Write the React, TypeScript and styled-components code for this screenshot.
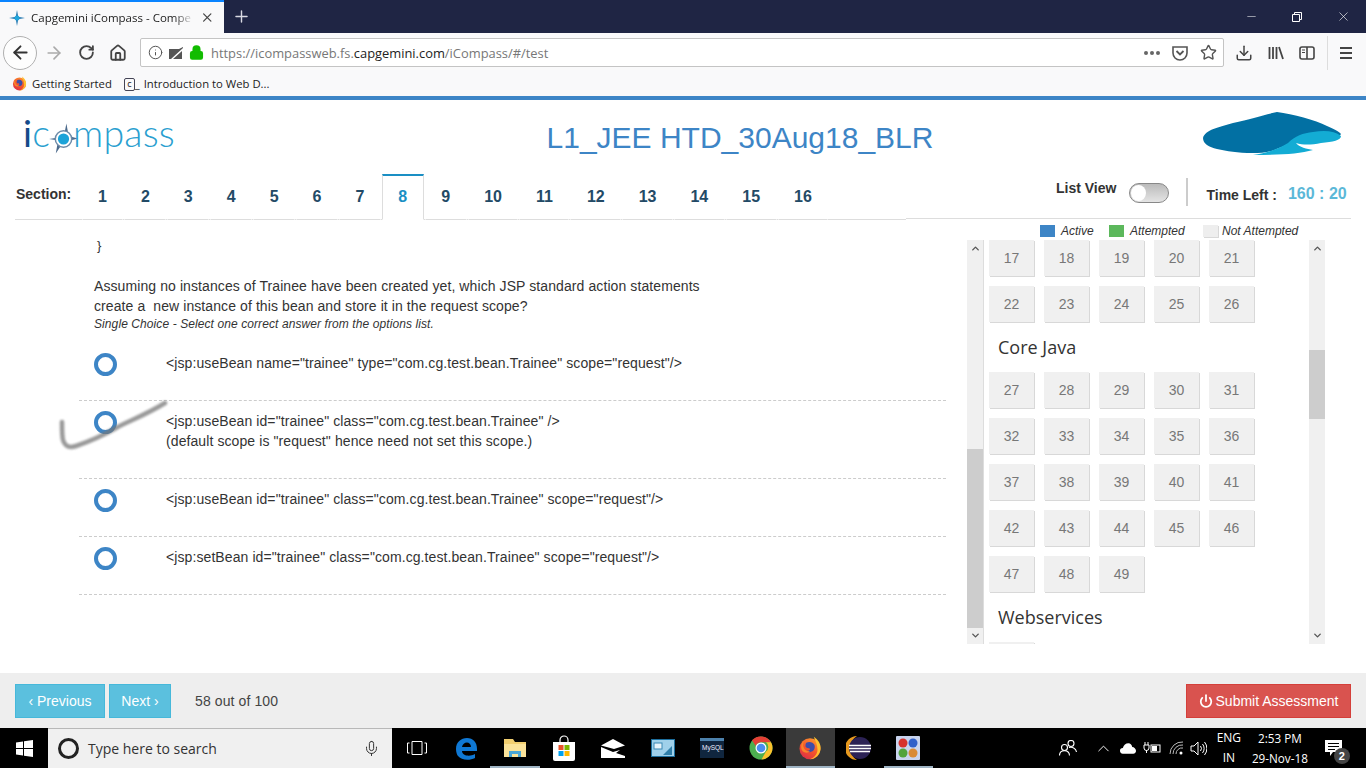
import styled, { createGlobalStyle } from "styled-components";
import {
  ArrowLeft,
  ArrowRight,
  RotateCw,
  Home,
  Info,
  Lock,
  Star,
  Download,
  Minus,
  X,
  Plus,
  Power,
  Mic,
  ChevronUp,
  ChevronDown,
} from "lucide-react";

const GlobalStyle = createGlobalStyle`
  html, body {
    margin: 0;
    padding: 0;
    overflow: hidden;
    background: #fff;
  }
  * { box-sizing: border-box; }
`;

const sections = [1, 2, 3, 4, 5, 6, 7, 8, 9, 10, 11, 12, 13, 14, 15, 16];

const options = [
  { lines: ['<jsp:useBean name="trainee" type="com.cg.test.bean.Trainee" scope="request"/>'], tall: false },
  {
    lines: ['<jsp:useBean id="trainee" class="com.cg.test.bean.Trainee" />', '(default scope is "request" hence need not set this scope.)'],
    tall: true,
  },
  { lines: ['<jsp:useBean id="trainee" class="com.cg.test.bean.Trainee" scope="request"/>'], tall: false },
  { lines: ['<jsp:setBean id="trainee" class="com.cg.test.bean.Trainee" scope="request"/>'], tall: false },
];

const range = (from: number, to: number) =>
  Array.from({ length: to - from + 1 }, (_, i) => from + i);

function FirefoxIcon({ size }: { size: number }) {
  return (
    <svg width={size} height={size} viewBox="0 0 32 32">
      <defs>
        <linearGradient id="ffg" x1="0.8" y1="0" x2="0.2" y2="1">
          <stop offset="0" stopColor="#ff9a2e" />
          <stop offset="0.55" stopColor="#f4532c" />
          <stop offset="1" stopColor="#d92d4a" />
        </linearGradient>
      </defs>
      <circle cx="16" cy="17" r="14" fill="url(#ffg)" />
      <path d="M11 9c4-2 9-1 11 3 1 3 0 6-2 8-3 2-7 2-9 0 3 0 5-1 5-3-2-1-5-1-6-3 0-2 0-4 1-5z" fill="#3f4da8" />
      <path d="M21 1c6 4 10 10 9 17-1 7-7 13-14 13 6-2 10-7 10-13 0-6-3-12-5-17z" fill="#ffc12e" />
      <path d="M8 6c-1 3-2 7 0 10 1 3 5 5 8 4-2 3-7 3-10 0-3-4-2-10 2-14z" fill="#f9842a" />
    </svg>
  );
}

function CompassMark() {
  return (
    <svg width="29" height="32" viewBox="0 0 30 32">
      <path d="M18 0l-2 10 4 1z M7 31l6-9-4-2z M0 16l10-1.500v3z M30 15.500l-10-2.500v5z" fill="#4c6a8c" />
      <circle cx="15" cy="16" r="8.500" fill="#fff" stroke="#6d8ba8" strokeWidth="1.500" />
      <circle cx="15" cy="16" r="5.800" fill="#1ca3d8" />
    </svg>
  );
}

function CapgeminiLogo() {
  return (
    <svg width="138" height="44" viewBox="0 0 138 44">
      <path
        d="M0 26C2 18 16 15 30 11 48 7 60 3 74 0c16 2 38 8 50 14 6 3 12 5 14 8-2 4-18 6-34 8-14 0-20 3-28 6-10 5-18 5-26 5-16 0-26-2-36-4C6 35 0 32 0 26z"
        fill="#0270a3"
      />
      <path
        d="M85 31c7-7 15-10 25-11 12-2 22-1 28 4 0 4-8 6-20 7-10 2-18 2-25 0 3 4 11 6 17 7-14 4-34 5-60 5 12-2 24-5 35-12z"
        fill="#13acd4"
      />
    </svg>
  );
}

function EdgeIcon() {
  return (
    <svg width="24" height="24" viewBox="0 0 24 24">
      <path
        d="M2 13C2 6 7 2 13 2c6 0 10 4 10 11v2H8c0 5 8 6 13 3v4c-6 3-14 2-17-2-1-1-2-4-2-7zm6-2h9c0-6-8-6-9 0z"
        fill="#0f78d4"
      />
    </svg>
  );
}

function ExplorerIcon() {
  return (
    <svg width="24" height="24" viewBox="0 0 24 24">
      <path d="M1 3h9l2 3h11v15H1z" fill="#f2cf70" />
      <path d="M1 8h22v13H1z" fill="#fbe39a" />
      <path d="M6 21v-6h12v6h-3v-3H9v3z" fill="#4aa6d6" />
    </svg>
  );
}

function StoreIcon() {
  return (
    <svg width="24" height="26" viewBox="0 0 24 26">
      <path d="M8 7V5a4 4 0 0 1 8 0v2" fill="none" stroke="#fff" strokeWidth="1.200" />
      <path d="M1 7h22v17a2 2 0 0 1-2 2H3a2 2 0 0 1-2-2z" fill="#fff" />
      <rect x="6.500" y="10" width="5" height="5" fill="#e8532b" />
      <rect x="12.500" y="10" width="5" height="5" fill="#7db700" />
      <rect x="6.500" y="16" width="5" height="5" fill="#00a1ef" />
      <rect x="12.500" y="16" width="5" height="5" fill="#ffb900" />
    </svg>
  );
}

function MailIcon() {
  return (
    <svg width="24" height="20" viewBox="0 0 24 20">
      <path d="M0 7.500L12 1l12 6.500-11 3.500z" fill="#fff" />
      <path d="M0 9l12 5 7-2-4 3 9 3v2H0z" fill="#fff" />
    </svg>
  );
}

function RemoteIcon() {
  return (
    <svg width="24" height="18" viewBox="0 0 24 18">
      <rect width="24" height="18" fill="#9fd0ea" />
      <rect x="0.500" y="0.500" width="23" height="17" fill="none" stroke="#1d6f9e" />
      <rect x="3" y="4" width="8" height="6" fill="#e6f3fa" stroke="#3b87b3" />
      <path d="M12 16l9-9v9z" fill="#2f7ea9" />
    </svg>
  );
}

function MysqlIcon() {
  return (
    <svg width="24" height="20" viewBox="0 0 24 20">
      <rect width="24" height="20" fill="#10263f" />
      <rect width="24" height="3" fill="#4d82ad" />
      <text x="2" y="12" fontSize="6.500" fill="#eef" fontFamily="Liberation Sans, sans-serif">MySQL</text>
    </svg>
  );
}

function ChromeIcon() {
  return (
    <svg width="24" height="24" viewBox="0 0 24 24">
      <circle cx="12" cy="12" r="11.500" fill="#4caf50" />
      <path d="M12 .5a11.500 11.500 0 0 1 10 5.800H12a5.700 5.700 0 0 0-5.300 3.600L3 4.300A11.500 11.500 0 0 1 12 .5z" fill="#e53f35" />
      <path d="M22 6.300a11.500 11.500 0 0 1-9.500 17.200l4.500-8a5.700 5.700 0 0 0 0-9.200z" fill="#fbc02d" />
      <circle cx="12" cy="12" r="5.500" fill="#fff" />
      <circle cx="12" cy="12" r="4.300" fill="#4a8df0" />
    </svg>
  );
}

function EclipseIcon() {
  return (
    <svg width="26" height="24" viewBox="0 0 26 24">
      <path d="M11 0a12 12 0 0 0 0 24A14 14 0 0 1 11 0z" fill="#e79a1f" />
      <circle cx="14" cy="12" r="11" fill="#2c2255" />
      <path d="M3 9.500h22M3 12.500h22M4 15.500h20" stroke="#fff" strokeWidth="1.300" />
    </svg>
  );
}

function PaintIcon() {
  return (
    <svg width="24" height="24" viewBox="0 0 24 24">
      <rect width="24" height="24" rx="1" fill="#c9d4ee" />
      <circle cx="7" cy="7" r="4.500" fill="#d6322d" />
      <circle cx="17" cy="7" r="4.500" fill="#2f5fc9" />
      <circle cx="7" cy="17" r="4.500" fill="#52a33b" />
      <circle cx="17" cy="17" r="4.500" fill="#d98a35" />
    </svg>
  );
}

function WindowsLogo() {
  return (
    <svg width="17" height="17" viewBox="0 0 17 17">
      <path d="M0 2.400l7-1v6.600H0zM8 1.200L17 0v8H8zM0 9h7v6.600l-7-1zM8 9h9v8l-9-1.200z" fill="#fff" />
    </svg>
  );
}

export default function App() {
  return (
    <Screen>
      <GlobalStyle />
      <TabStrip>
        <BrowserTab>
          <Favicon viewBox="0 0 16 16">
            <path d="M8 0l1.300 6.700L16 8l-6.700 1.300L8 16 6.700 9.300 0 8l6.700-1.300z" fill="#2f7fb5" />
            <circle cx="8" cy="8" r="2.500" fill="#22a7dc" />
          </Favicon>
          <TabTitle>Capgemini iCompass - Compe</TabTitle>
          <X size={15} strokeWidth={2} color="#444" />
        </BrowserTab>
        <NewTab>
          <Plus size={19} strokeWidth={1.8} color="#d8d9e2" />
        </NewTab>
        <WindowControls>
          <WindowButton>
            <Minus size={13} strokeWidth={1} color="#fff" />
          </WindowButton>
          <WindowButton>
            <svg width="10" height="10" viewBox="0 0 10 10">
              <path d="M.5 2.500h7v7h-7zM2.500 2.500v-2h7v7h-2" fill="none" stroke="#fff" />
            </svg>
          </WindowButton>
          <WindowButton>
            <X size={15} strokeWidth={1} color="#fff" />
          </WindowButton>
        </WindowControls>
      </TabStrip>

      <NavBar>
        <BackButton>
          <ArrowLeft size={21} strokeWidth={2.2} color="#333" />
        </BackButton>
        <NavButton>
          <ArrowRight size={20} strokeWidth={2} color="#aaa" />
        </NavButton>
        <NavButton>
          <RotateCw size={17} strokeWidth={2.6} color="#444" />
        </NavButton>
        <NavButton>
          <Home size={18} strokeWidth={2.4} color="#444" />
        </NavButton>
        <UrlBox>
          <Info size={15} strokeWidth={1.6} color="#555" />
          <svg width="16" height="14" viewBox="0 0 16 14">
            <path d="M1 3h10l4-2v1L3 13H1z M5 13l9-8v8z" fill="#555" />
          </svg>
          <Lock size={15} strokeWidth={3} color="#12bc00" fill="#12bc00" />
          <UrlText>
            https://icompassweb.fs.<UrlHost>capgemini.com</UrlHost>/iCompass/#/test
          </UrlText>
          <UrlActions>
            <svg width="16" height="4" viewBox="0 0 16 4">
              <circle cx="2" cy="2" r="2" fill="#666" />
              <circle cx="8" cy="2" r="2" fill="#666" />
              <circle cx="14" cy="2" r="2" fill="#666" />
            </svg>
            <svg width="16" height="16" viewBox="0 0 16 16">
              <path d="M1 2h14v6a7 7 0 0 1-14 0z" fill="none" stroke="#555" strokeWidth="1.600" />
              <path d="M4.500 6L8 9.500 11.500 6" fill="none" stroke="#555" strokeWidth="1.800" />
            </svg>
            <Star size={17} strokeWidth={2} color="#555" />
          </UrlActions>
        </UrlBox>
        <ToolIcons>
          <Download size={18} strokeWidth={2} color="#444" />
          <svg width="16" height="16" viewBox="0 0 16 16">
            <path d="M1.500 2v12M5 2v12M8.500 2v12M11 2l4 12" stroke="#444" strokeWidth="1.800" fill="none" />
          </svg>
          <svg width="16" height="14" viewBox="0 0 16 14">
            <rect x="1" y="1" width="14" height="12" rx="2" fill="none" stroke="#444" strokeWidth="1.600" />
            <path d="M8 1v12" stroke="#444" strokeWidth="1.600" />
            <path d="M3 4h3M3 6.500h3" stroke="#444" />
          </svg>
          <ToolSeparator />
          <svg width="14" height="14" viewBox="0 0 14 14">
            <path d="M1 2h12M1 7h12M1 12h12" stroke="#444" strokeWidth="2" />
          </svg>
        </ToolIcons>
      </NavBar>

      <BookmarksBar>
        <FirefoxIcon size={15} />
        <BookmarkLabel>Getting Started</BookmarkLabel>
        <CodeBadge>
          <CodeBox>c</CodeBox>_
        </CodeBadge>
        <BookmarkLabel>Introduction to Web D...</BookmarkLabel>
      </BookmarksBar>

      <Page>
        <Masthead>
          <Logo>
            <LogoDot>i</LogoDot>
            <LogoLetter>c</LogoLetter>
            <CompassSlot>
              <CompassMark />
            </CompassSlot>
            mpass
          </Logo>
          <Title>L1_JEE HTD_30Aug18_BLR</Title>
          <BrandMark>
            <CapgeminiLogo />
          </BrandMark>
        </Masthead>

        <SectionRow>
          <Tabs>
            <SectionLabel>Section:</SectionLabel>
            {sections.map((n) => (
              <SectionTab key={n} $active={n === 8}>
                {n}
              </SectionTab>
            ))}
          </Tabs>
          <RightTools>
            <ListViewLabel>List View</ListViewLabel>
            <Toggle>
              <Knob />
            </Toggle>
            <ToolDivider />
            <TimeLabel>Time Left :</TimeLabel>
            <TimeValue>160 : 20</TimeValue>
          </RightTools>
        </SectionRow>

        <Main>
          <Question>
            <CodeTail>{"}"}</CodeTail>
            <QuestionText>
              Assuming no instances of Trainee have been created yet, which JSP standard action statements
              <br />
              create a&nbsp; new instance of this bean and store it in the request scope?
            </QuestionText>
            <Hint>Single Choice - Select one correct answer from the options list.</Hint>
            <OptionList>
              {options.map((option, i) => (
                <OptionRow key={i} $tall={option.tall}>
                  <Radio />
                  <OptionText>
                    {option.lines.map((line) => (
                      <div key={line}>{line}</div>
                    ))}
                  </OptionText>
                  {i === 1 && (
                    <PenMark width="112" height="56" viewBox="0 0 112 56">
                      <path
                        d="M4 22c0 8 0 14 1 18 2 7 7 8 13 6 12-4 26-10 40-18 10-6 28-12 49-25"
                        fill="none"
                        stroke="#777"
                        strokeWidth="4.500"
                        strokeLinecap="round"
                      />
                    </PenMark>
                  )}
                </OptionRow>
              ))}
            </OptionList>
          </Question>

          <Side>
            <Legend>
              <Swatch $color="#3d85c6" />
              <LegendText $width={48}>Active</LegendText>
              <Swatch $color="#5cb85c" />
              <LegendText $width={73}>Attempted</LegendText>
              <Swatch $color="#eeeeee" $gap={4} $raised />
              <LegendText $width={85}>Not Attempted</LegendText>
            </Legend>
            <Palette>
              <Scrollbar>
                <ChevronUp size={11} strokeWidth={3} color="#555" />
                <ThumbTrack $top={198} $height={179} />
                <ChevronDown size={11} strokeWidth={3} color="#555" />
              </Scrollbar>
              <PaletteBody>
                <ButtonGrid>
                  {range(17, 26).map((n) => (
                    <NumberButton key={n}>{n}</NumberButton>
                  ))}
                </ButtonGrid>
                <GroupTitle>Core Java</GroupTitle>
                <ButtonGrid>
                  {range(27, 49).map((n) => (
                    <NumberButton key={n}>{n}</NumberButton>
                  ))}
                </ButtonGrid>
                <GroupTitle>Webservices</GroupTitle>
                <ButtonGrid>
                  <NumberButton />
                </ButtonGrid>
              </PaletteBody>
              <Scrollbar>
                <ChevronUp size={11} strokeWidth={3} color="#555" />
                <ThumbTrack $top={99} $height={69} />
                <ChevronDown size={11} strokeWidth={3} color="#555" />
              </Scrollbar>
            </Palette>
          </Side>
        </Main>

        <Footer>
          <InfoButton $width={90}>‹ Previous</InfoButton>
          <InfoButton $width={62}>Next ›</InfoButton>
          <Progress>58 out of 100</Progress>
          <SubmitButton>
            <Power size={14} strokeWidth={3} />
            Submit Assessment
          </SubmitButton>
        </Footer>
      </Page>

      <Taskbar>
        <StartButton>
          <WindowsLogo />
        </StartButton>
        <SearchBox>
          <CortanaRing />
          <SearchText>Type here to search</SearchText>
          <Mic size={17} strokeWidth={1.4} color="#333" />
        </SearchBox>
        <TaskCell>
          <svg width="20" height="14" viewBox="0 0 20 14">
            <path d="M5 .5h10v13H5zM2.500 2H.5v10h2M17.500 2h2v10h-2" fill="none" stroke="#fff" />
          </svg>
        </TaskCell>
        <TaskCell><EdgeIcon /></TaskCell>
        <TaskCell $open><ExplorerIcon /></TaskCell>
        <TaskCell><StoreIcon /></TaskCell>
        <TaskCell><MailIcon /></TaskCell>
        <TaskCell><RemoteIcon /></TaskCell>
        <TaskCell><MysqlIcon /></TaskCell>
        <TaskCell><ChromeIcon /></TaskCell>
        <TaskCell $open $active><FirefoxIcon size={24} /></TaskCell>
        <TaskCell><EclipseIcon /></TaskCell>
        <TaskCell $open><PaintIcon /></TaskCell>
        <Tray>
          <TrayIcon $width={40}>
            <svg width="18" height="16" viewBox="0 0 18 16" fill="none" stroke="#fff" strokeWidth="1.100">
              <circle cx="5.500" cy="7.500" r="3" />
              <path d="M.5 15.500c0-3 2-4.800 5-4.800s5 1.800 5 4.800" />
              <circle cx="12" cy="3.500" r="3" />
              <path d="M10 7.600c3-1 7 .5 7.500 4.400" />
            </svg>
          </TrayIcon>
          <TrayIcon $width={32}>
            <ChevronUp size={19} strokeWidth={1.2} color="#fff" />
          </TrayIcon>
          <TrayIcon $width={16}>
            <svg width="17" height="11" viewBox="0 0 17 11">
              <path d="M3 11a3 3 0 0 1 0-6c1-3 3-5 6-5 2 0 4 2 4 4 2 0 4 2 4 4s-1 3-3 3z" fill="#fff" />
            </svg>
          </TrayIcon>
          <TrayIcon $width={32}>
            <svg width="18" height="12" viewBox="0 0 18 12">
              <path d="M2 0v3M5 0v3M1 3h5v3a2.500 2.500 0 0 1-5 0zM3.500 8v3" stroke="#fff" fill="none" />
              <rect x="8" y="3" width="9" height="7" fill="none" stroke="#fff" />
              <rect x="9" y="4" width="5" height="5" fill="#fff" />
            </svg>
          </TrayIcon>
          <TrayIcon $width={18}>
            <svg width="16" height="14" viewBox="0 0 16 14">
              <path d="M1 13A12 12 0 0 1 14 1M4 13a9 9 0 0 1 10-9M7 13a6 6 0 0 1 7-6" fill="none" stroke="#bbb" />
              <circle cx="12" cy="12" r="1.500" fill="#fff" />
            </svg>
          </TrayIcon>
          <TrayIcon $width={26}>
            <svg width="17" height="15" viewBox="0 0 17 15" fill="none" stroke="#fff">
              <path d="M1 5h3l4-4v13l-4-4H1z" />
              <path d="M10.500 5a4 4 0 0 1 0 5M12.500 3a7 7 0 0 1 0 9M14.500 1a10 10 0 0 1 0 13" />
            </svg>
          </TrayIcon>
          <LangBlock>
            <div>ENG</div>
            <div>IN</div>
          </LangBlock>
          <ClockBlock>
            <div>2:53 PM</div>
            <div>29-Nov-18</div>
          </ClockBlock>
          <NoticeArea>
            <svg width="17" height="16" viewBox="0 0 17 16">
              <path d="M0 0h17v12H8l-3 4v-4H0z" fill="#fff" />
              <path d="M3 3.500h11M3 6.500h11M3 9.500h7" stroke="#000" />
            </svg>
            <NoticeBadge>2</NoticeBadge>
          </NoticeArea>
        </Tray>
      </Taskbar>
    </Screen>
  );
}

const Screen = styled.div`
  width: 1366px;
  height: 768px;
  display: flex;
  flex-direction: column;
  overflow: hidden;
  font-family: "Liberation Sans", Arial, sans-serif;
  color: #333;
`;

const TabStrip = styled.div`
  height: 33px;
  flex: none;
  display: flex;
  background: #1f2544;
`;

const BrowserTab = styled.div`
  width: 224px;
  display: flex;
  align-items: center;
  padding: 0 9px;
  background: #f9f9fa;
  border-top: 2px solid #0a84ff;
  gap: 6px;
`;

const Favicon = styled.svg`
  width: 16px;
  height: 16px;
  flex: none;
`;

const TabTitle = styled.div`
  width: 169px;
  overflow: hidden;
  white-space: nowrap;
  font: 11.500px "Open Sans", sans-serif;
  color: #222;
  -webkit-mask-image: linear-gradient(to right, #000 88%, transparent);
  mask-image: linear-gradient(to right, #000 88%, transparent);
`;

const NewTab = styled.div`
  width: 34px;
  display: flex;
  align-items: center;
  justify-content: center;
`;

const WindowControls = styled.div`
  margin-left: auto;
  display: flex;
`;

const WindowButton = styled.div`
  width: 46px;
  display: flex;
  align-items: center;
  justify-content: center;
`;

const NavBar = styled.div`
  height: 37px;
  flex: none;
  display: flex;
  align-items: center;
  padding-left: 3px;
  background: #f9f9fa;
`;

const BackButton = styled.div`
  width: 34px;
  height: 34px;
  margin: 2px 1px 0 0;
  display: flex;
  align-items: center;
  justify-content: center;
  border: 1px solid #b0b0b0;
  border-radius: 50%;
  background: #fdfdfd;
`;

const NavButton = styled.div`
  width: 32px;
  height: 32px;
  margin-top: 2px;
  display: flex;
  align-items: center;
  justify-content: center;
`;

const UrlBox = styled.div`
  width: 1084px;
  height: 29px;
  margin-left: 6px;
  margin-top: 2px;
  display: flex;
  align-items: center;
  gap: 5px;
  padding: 0 6px 0 7px;
  background: #fff;
  border: 1px solid #c4c4c4;
  border-radius: 2px;
`;

const UrlText = styled.div`
  flex: 1;
  margin-left: 2px;
  font: 12.900px "Open Sans", sans-serif;
  color: #777;
  white-space: nowrap;
`;

const UrlHost = styled.span`
  color: #222;
`;

const UrlActions = styled.div`
  display: flex;
  align-items: center;
  gap: 12px;
`;

const ToolIcons = styled.div`
  display: flex;
  align-items: center;
  flex: 1;
  gap: 15px;
  padding-left: 11px;
  margin-top: 2px;
`;

const ToolSeparator = styled.div`
  width: 1px;
  height: 34px;
  background: #ddd;
  margin: 0 -4px 0 -3px;
`;

const BookmarksBar = styled.div`
  height: 26px;
  flex: none;
  display: flex;
  align-items: center;
  padding: 0 12px;
  background: #f9f9fa;
  font: 11.300px "Open Sans", sans-serif;
  color: #222;
`;

const BookmarkLabel = styled.span`
  margin-left: 5px;
`;

const CodeBadge = styled.span`
  margin-left: 12px;
  margin-right: -1px;
  display: flex;
  align-items: flex-end;
  font-size: 11px;
`;

const CodeBox = styled.span`
  width: 11px;
  height: 13px;
  border: 1.500px solid #445;
  border-radius: 2px;
  font-size: 9px;
  line-height: 10px;
  text-align: center;
`;

const Page = styled.div`
  flex: 1;
  display: flex;
  flex-direction: column;
  background: #fff;
  border-top: 4px solid #3d85c6;
`;

const Masthead = styled.div`
  height: 74px;
  flex: none;
  position: relative;
  display: flex;
  align-items: flex-start;
  justify-content: space-between;
  padding: 8px 25px 0;
`;

const Logo = styled.div`
  display: flex;
  align-items: center;
  height: 46px;
  margin: 1px 0 0 -2px;
  font: 300 37.500px "Lato", "Open Sans", sans-serif;
  color: #2a9fd0;
  letter-spacing: 0.2px;
`;

const LogoDot = styled.span`
  font-weight: 400;
  color: #154a8a;
`;

const LogoLetter = styled.span`
  margin: 0 -1px 0 0;
`;

const CompassSlot = styled.span`
  display: flex;
  margin: 14px -5px 0 0;
`;

const Title = styled.h1`
  position: absolute;
  left: 0;
  right: 0;
  top: 18px;
  margin: 0 0 0 114px;
  text-align: center;
  font-size: 30px;
  font-weight: 400;
  line-height: 40px;
  color: #3d85c6;
`;

const BrandMark = styled.div`
  margin: 4px 0 0;
`;

const SectionRow = styled.div`
  height: 46px;
  flex: none;
  display: flex;
  padding: 0 15px;
`;

const Tabs = styled.div`
  width: 891px;
  display: flex;
  align-items: stretch;
  border-bottom: 1px solid #ddd;
`;

const SectionLabel = styled.div`
  width: 66.500px;
  padding: 12px 0 0 1px;
  font-size: 14px;
  font-weight: 700;
`;

const SectionTab = styled.div<{ $active?: boolean }>`
  margin: 0 1px -1px 0;
  padding: 12px 15.500px 0;
  text-align: center;
  font-size: 16px;
  font-weight: 700;
  color: ${(p) => (p.$active ? "#1a8fc4" : "#234a66")};
  background: #fff;
  border: 1px solid ${(p) => (p.$active ? "#ddd" : "transparent")};
  border-bottom: 1px solid ${(p) => (p.$active ? "#fff" : "#ddd")};
  border-top: 2px solid ${(p) => (p.$active ? "#1a8fc4" : "transparent")};
`;

const RightTools = styled.div`
  flex: 1;
  display: flex;
  align-items: flex-start;
  padding-left: 150px;
  border-bottom: 1px solid #ddd;
  margin-bottom: 1px;
`;

const ListViewLabel = styled.div`
  margin-top: 6px;
  font-size: 14px;
  font-weight: 700;
  white-space: nowrap;
`;

const Toggle = styled.div`
  width: 40px;
  height: 20px;
  margin: 9px 0 0 13px;
  padding: 1px;
  background: linear-gradient(#bbb, #e4e4e4);
  border: 1px solid #888;
  border-radius: 10px;
`;

const Knob = styled.div`
  width: 15px;
  height: 16px;
  background: #fff;
  border-radius: 50%;
`;

const ToolDivider = styled.div`
  width: 2px;
  height: 28px;
  margin: 4px 18px 0 17px;
  background: #ccc;
`;

const TimeLabel = styled.div`
  margin-top: 13px;
  font-size: 14px;
  font-weight: 700;
  white-space: nowrap;
`;

const TimeValue = styled.div`
  margin: 11px 0 0 11px;
  font-size: 16px;
  font-weight: 700;
  color: #5bb8d8;
  white-space: nowrap;
`;

const Main = styled.div`
  flex: 1;
  min-height: 0;
  display: flex;
`;

const Question = styled.div`
  width: 946px;
  padding: 16px 0 0 79px;
  font-size: 14px;
  line-height: 20px;
  letter-spacing: 0.09px;
`;

const CodeTail = styled.div`
  margin-left: 18px;
  height: 40px;
  font-size: 13px;
`;

const QuestionText = styled.div`
  margin-left: 15px;
`;

const Hint = styled.div`
  margin-left: 15px;
  font-size: 12px;
  font-style: italic;
  line-height: 16px;
`;

const OptionList = styled.div`
  margin-top: 11px;
`;

const OptionRow = styled.div<{ $tall: boolean }>`
  position: relative;
  height: ${(p) => (p.$tall ? 78 : 58)}px;
  display: flex;
  align-items: flex-start;
  padding-top: 10px;
  border-bottom: 1px dashed #ccc;
`;

const Radio = styled.div`
  width: 23px;
  height: 23px;
  margin: 0 49px 0 15px;
  border: 4.500px solid #3d85c6;
  border-radius: 50%;
  background: #fff;
`;

const OptionText = styled.div`
  color: #333;
`;

const PenMark = styled.svg`
  position: absolute;
  left: -21px;
  top: -1px;
  opacity: 0.75;
  filter: blur(0.8px);
`;

const Side = styled.div`
  width: 379px;
  margin-left: 21px;
  display: flex;
  flex-direction: column;
`;

const Legend = styled.div`
  height: 20px;
  flex: none;
  display: flex;
  align-items: center;
  padding: 1px 0 0 73px;
`;

const Swatch = styled.span<{ $color: string; $gap?: number; $raised?: boolean }>`
  width: 15px;
  height: 12px;
  margin-right: ${(p) => p.$gap ?? 6}px;
  background: ${(p) => p.$color};
  box-shadow: ${(p) => (p.$raised ? "1px 1px 0 #d8d8d8" : "none")};
`;

const LegendText = styled.span<{ $width: number }>`
  width: ${(p) => p.$width}px;
  font-size: 12px;
  font-style: italic;
  white-space: nowrap;
`;

const Palette = styled.div`
  height: 404px;
  width: 358px;
  display: flex;
`;

const Scrollbar = styled.div`
  position: relative;
  width: 16px;
  flex: none;
  display: flex;
  flex-direction: column;
  align-items: center;
  justify-content: space-between;
  padding: 3px 0;
  background: #f0f0f0;
`;

const ThumbTrack = styled.div<{ $top: number; $height: number }>`
  position: absolute;
  left: 0;
  right: 0;
  top: ${(p) => p.$top + 11}px;
  height: ${(p) => p.$height}px;
  background: #cdcdcd;
`;

const PaletteBody = styled.div`
  flex: 1;
  overflow: hidden;
  padding-left: 5px;
  border-left: 1px solid #ddd;
`;

const ButtonGrid = styled.div`
  display: grid;
  grid-template-columns: repeat(5, 45px);
  column-gap: 10px;
  row-gap: 10px;
  margin-bottom: 10px;
`;

const NumberButton = styled.div`
  height: 36px;
  display: flex;
  align-items: center;
  justify-content: center;
  font-size: 14px;
  color: #777;
  background: #f0f0f0;
  box-shadow: 1px 1px 0 #d8d8d8;
`;

const GroupTitle = styled.div`
  height: 40px;
  padding: 1px 0 0 9px;
  font: 18px/29px "Open Sans", sans-serif;
  color: #333;
`;

const Footer = styled.div`
  height: 55px;
  flex: none;
  display: flex;
  align-items: center;
  gap: 4px;
  padding: 0 15px;
  background: #eeeeee;
`;

const InfoButton = styled.div<{ $width: number }>`
  width: ${(p) => p.$width}px;
  height: 34px;
  display: flex;
  align-items: center;
  justify-content: center;
  font-size: 14px;
  color: #fff;
  background: #5bc0de;
  border: 1px solid #46b8da;
  white-space: nowrap;
`;

const Progress = styled.div`
  margin-left: 20px;
  font-size: 14px;
  letter-spacing: 0.1px;
  color: #444;
`;

const SubmitButton = styled.div`
  margin-left: auto;
  width: 165px;
  height: 34px;
  display: flex;
  align-items: center;
  justify-content: center;
  gap: 3px;
  font-size: 14px;
  color: #fff;
  background: #d9534f;
  border: 1px solid #d43f3a;
`;

const Taskbar = styled.div`
  height: 40px;
  flex: none;
  display: flex;
  align-items: stretch;
  background: #000;
`;

const StartButton = styled.div`
  width: 48px;
  display: flex;
  align-items: center;
  justify-content: center;
`;

const SearchBox = styled.div`
  width: 344px;
  display: flex;
  align-items: center;
  padding: 0 12px 0 10px;
  background: #f0f0f0;
  border-top: 1px solid #b8b8b8;
`;

const CortanaRing = styled.div`
  width: 21px;
  height: 21px;
  border: 3px solid #222;
  border-radius: 50%;
`;

const SearchText = styled.div`
  flex: 1;
  margin-left: 9px;
  font: 14px "Open Sans", sans-serif;
  color: #333;
`;

const TaskCell = styled.div<{ $open?: boolean; $active?: boolean }>`
  width: 49.200px;
  flex: none;
  display: flex;
  align-items: center;
  justify-content: center;
  background: ${(p) => (p.$active ? "#3a3a3a" : "transparent")};
  box-shadow: ${(p) => (p.$open ? "inset 0 -2px 0 #9fb4c4" : "none")};
`;

const Tray = styled.div`
  flex: 1;
  display: flex;
  align-items: center;
  padding-left: 114.800px;
  color: #fff;
`;

const TrayIcon = styled.div<{ $width: number }>`
  width: ${(p) => p.$width}px;
  flex: none;
  display: flex;
  justify-content: center;
`;

const LangBlock = styled.div`
  width: 34px;
  text-align: center;
  font: 12px/20px "Open Sans", sans-serif;
`;

const ClockBlock = styled.div`
  width: 68px;
  text-align: center;
  font: 11.700px/20px "Open Sans", sans-serif;
`;

const NoticeArea = styled.div`
  position: relative;
  margin-left: 11px;
  display: flex;
`;

const NoticeBadge = styled.span`
  position: absolute;
  right: -8px;
  bottom: -8px;
  width: 16px;
  height: 16px;
  font-size: 11px;
  font-weight: 700;
  line-height: 16px;
  text-align: center;
  color: #fff;
  background: #444;
  border-radius: 50%;
`;
